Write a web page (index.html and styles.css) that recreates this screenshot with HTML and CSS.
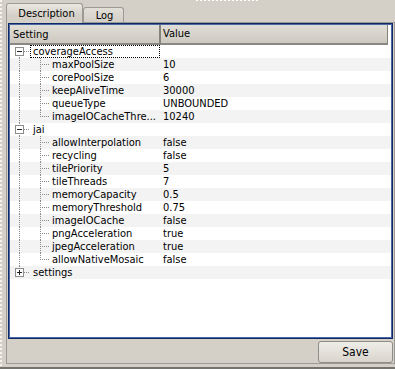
FILE: index.html
```html
<!DOCTYPE html>
<html lang="en">
<head>
    <meta charset="UTF-8">
    <title>Settings</title>
    <link rel="stylesheet" href="styles.css">
</head>
<body>
    <div class="top-dots"></div>
    <div class="app">
        <div class="tabs">
            <div class="tab active">Description</div>
            <div class="tab">Log</div>
        </div>
        <div class="panel">
            <div class="tree">
                <div class="head">
                    <div class="hcell setting">Setting</div>
                    <div class="hcell value">Value</div>
                </div>
                <div class="rows">
                    <div class="row">
                        <div class="name"><span class="g node first"><span class="box open"></span></span><span class="label focus">coverageAccess</span></div>
                    </div>
                    <div class="row">
                        <div class="name"><span class="g pipe"></span><span class="g2 tee"></span><span class="label">maxPoolSize</span></div>
                        <div class="value">10</div>
                    </div>
                    <div class="row">
                        <div class="name"><span class="g pipe"></span><span class="g2 tee"></span><span class="label">corePoolSize</span></div>
                        <div class="value">6</div>
                    </div>
                    <div class="row">
                        <div class="name"><span class="g pipe"></span><span class="g2 tee"></span><span class="label">keepAliveTime</span></div>
                        <div class="value">30000</div>
                    </div>
                    <div class="row">
                        <div class="name"><span class="g pipe"></span><span class="g2 tee"></span><span class="label">queueType</span></div>
                        <div class="value">UNBOUNDED</div>
                    </div>
                    <div class="row">
                        <div class="name"><span class="g pipe"></span><span class="g2 end"></span><span class="label">imageIOCacheThre...</span></div>
                        <div class="value">10240</div>
                    </div>
                    <div class="row">
                        <div class="name"><span class="g node mid"><span class="box open"></span></span><span class="label">jai</span></div>
                    </div>
                    <div class="row">
                        <div class="name"><span class="g pipe"></span><span class="g2 tee"></span><span class="label">allowInterpolation</span></div>
                        <div class="value">false</div>
                    </div>
                    <div class="row">
                        <div class="name"><span class="g pipe"></span><span class="g2 tee"></span><span class="label">recycling</span></div>
                        <div class="value">false</div>
                    </div>
                    <div class="row">
                        <div class="name"><span class="g pipe"></span><span class="g2 tee"></span><span class="label">tilePriority</span></div>
                        <div class="value">5</div>
                    </div>
                    <div class="row">
                        <div class="name"><span class="g pipe"></span><span class="g2 tee"></span><span class="label">tileThreads</span></div>
                        <div class="value">7</div>
                    </div>
                    <div class="row">
                        <div class="name"><span class="g pipe"></span><span class="g2 tee"></span><span class="label">memoryCapacity</span></div>
                        <div class="value">0.5</div>
                    </div>
                    <div class="row">
                        <div class="name"><span class="g pipe"></span><span class="g2 tee"></span><span class="label">memoryThreshold</span></div>
                        <div class="value">0.75</div>
                    </div>
                    <div class="row">
                        <div class="name"><span class="g pipe"></span><span class="g2 tee"></span><span class="label">imageIOCache</span></div>
                        <div class="value">false</div>
                    </div>
                    <div class="row">
                        <div class="name"><span class="g pipe"></span><span class="g2 tee"></span><span class="label">pngAcceleration</span></div>
                        <div class="value">true</div>
                    </div>
                    <div class="row">
                        <div class="name"><span class="g pipe"></span><span class="g2 tee"></span><span class="label">jpegAcceleration</span></div>
                        <div class="value">true</div>
                    </div>
                    <div class="row">
                        <div class="name"><span class="g pipe"></span><span class="g2 end"></span><span class="label">allowNativeMosaic</span></div>
                        <div class="value">false</div>
                    </div>
                    <div class="row">
                        <div class="name"><span class="g node last"><span class="box"></span></span><span class="label">settings</span></div>
                    </div>
                </div>
            </div>
            <div class="footer">
                <button class="save">Save</button>
            </div>
        </div>
        <div class="bottom-line"></div>
    </div>
</body>
</html>
```

FILE: styles.css
```css
body {
    margin: 0;
    width: 395px;
    height: 369px;
    overflow: hidden;
    font-family: "DejaVu Sans Condensed", "DejaVu Sans", sans-serif;
    font-stretch: condensed;
    font-size: 11px;
    color: #000;
    background: linear-gradient(to bottom, #f4f3ef 50%, transparent 50%) 0 0 / 2px 4px repeat-y, #d4d0c8;
}
.top-dots {
    height: 1px;
    width: 62px;
    margin-left: 196px;
    background: linear-gradient(to right, #fff 50%, transparent 50%) 0 0 / 4px 1px repeat-x;
}
.app {
    padding-left: 6px;
}
.tabs {
    display: flex;
    align-items: flex-end;
    height: 21px;
}
.tab {
    box-sizing: border-box;
    height: 15px;
    width: 41px;
    border: 1px solid #9c9a94;
    border-bottom: none;
    border-radius: 3px 3px 0 0;
    background: linear-gradient(#e2dfd8, #d4d0c8);
    text-align: center;
    line-height: 15px;
    padding-left: 2px;
}
.tab.active {
    position: relative;
    z-index: 1;
    width: 77px;
    height: 20px;
    margin-bottom: -1px;
    line-height: 20px;
    background: linear-gradient(#eae8e2, #d4d0c8 60%);
    padding-left: 4px;
}
.panel {
    box-sizing: border-box;
    width: 389px;
    border: 1px solid #9c9a94;
    padding: 0 1px;
}
.tree {
    box-sizing: border-box;
    height: 316px;
    border: 1px solid #0c2866;
    box-shadow: inset 0 0 0 1px #4b68a3;
    padding: 1px;
    background: #fff;
    overflow: hidden;
}
.head {
    display: flex;
    height: 20px;
}
.hcell {
    box-sizing: border-box;
    height: 20px;
    padding-top: 2px;
    line-height: 16px;
    background: linear-gradient(#e1ded7, #cdc9c1);
    border-bottom: 2px solid #8a8882;
}
.hcell.setting {
    width: 151px;
    padding-left: 3px;
    border-right: 2px solid #85837d;
}
.hcell.value {
    width: 227px;
    padding-left: 2px;
    border-right: 1px solid #85837d;
}
.row {
    display: flex;
    height: 13px;
}
.row:nth-child(even) {
    background: #f3f3f3;
}
.name {
    display: flex;
    width: 150px;
    height: 13px;
}
.value {
    padding-left: 3px;
    line-height: 13px;
    white-space: nowrap;
}
.label {
    box-sizing: border-box;
    height: 13px;
    line-height: 11px;
    padding: 0 2px;
    border: 1px solid transparent;
    white-space: nowrap;
}
.label.focus {
    flex: 1;
    border: 1px dotted #000;
}
/* tree guide lines */
.g, .g2 {
    position: relative;
    flex: none;
    height: 13px;
}
.g {
    width: 20px;
}
.g2 {
    width: 19px;
}
.g::before, .g2::before {
    content: "";
    position: absolute;
    left: 9px;
    top: 0;
    width: 1px;
    height: 13px;
    background: repeating-linear-gradient(to bottom, #8a8a8a 0 1px, transparent 1px 2px);
}
.g2::before {
    left: 10px;
}
.g2::after, .node::after {
    content: "";
    position: absolute;
    top: 6px;
    left: 10px;
    width: 9px;
    height: 1px;
    background: repeating-linear-gradient(to right, #8a8a8a 0 1px, transparent 1px 2px);
}
.g2.end::before {
    height: 7px;
}
.node.first::before {
    top: 6px;
    height: 7px;
}
.node.last::before {
    height: 7px;
}
.node::after {
    left: 14px;
    width: 6px;
}
.box {
    position: absolute;
    z-index: 1;
    left: 5px;
    top: 2px;
    box-sizing: border-box;
    width: 9px;
    height: 9px;
    border: 1px solid #8c8c8c;
    background: #fff;
}
.box::before {
    content: "";
    position: absolute;
    left: 1px;
    top: 3px;
    width: 5px;
    height: 1px;
    background: #222;
}
.box::after {
    content: "";
    position: absolute;
    left: 3px;
    top: 1px;
    width: 1px;
    height: 5px;
    background: #222;
}
.box.open::after {
    display: none;
}
.footer {
    display: flex;
    justify-content: flex-end;
    align-items: flex-end;
    height: 24px;
}
.save {
    box-sizing: border-box;
    width: 75px;
    height: 22px;
    border: 1px solid #8f8d87;
    border-radius: 3px;
    background: linear-gradient(#efede8, #d9d5cd);
    font-family: inherit;
    font-stretch: condensed;
    font-size: 12px;
    color: #000;
    padding: 0;
}
.bottom-line {
    margin-top: 3px;
    margin-left: -6px;
    height: 2px;
    background: #75736e;
}
```
